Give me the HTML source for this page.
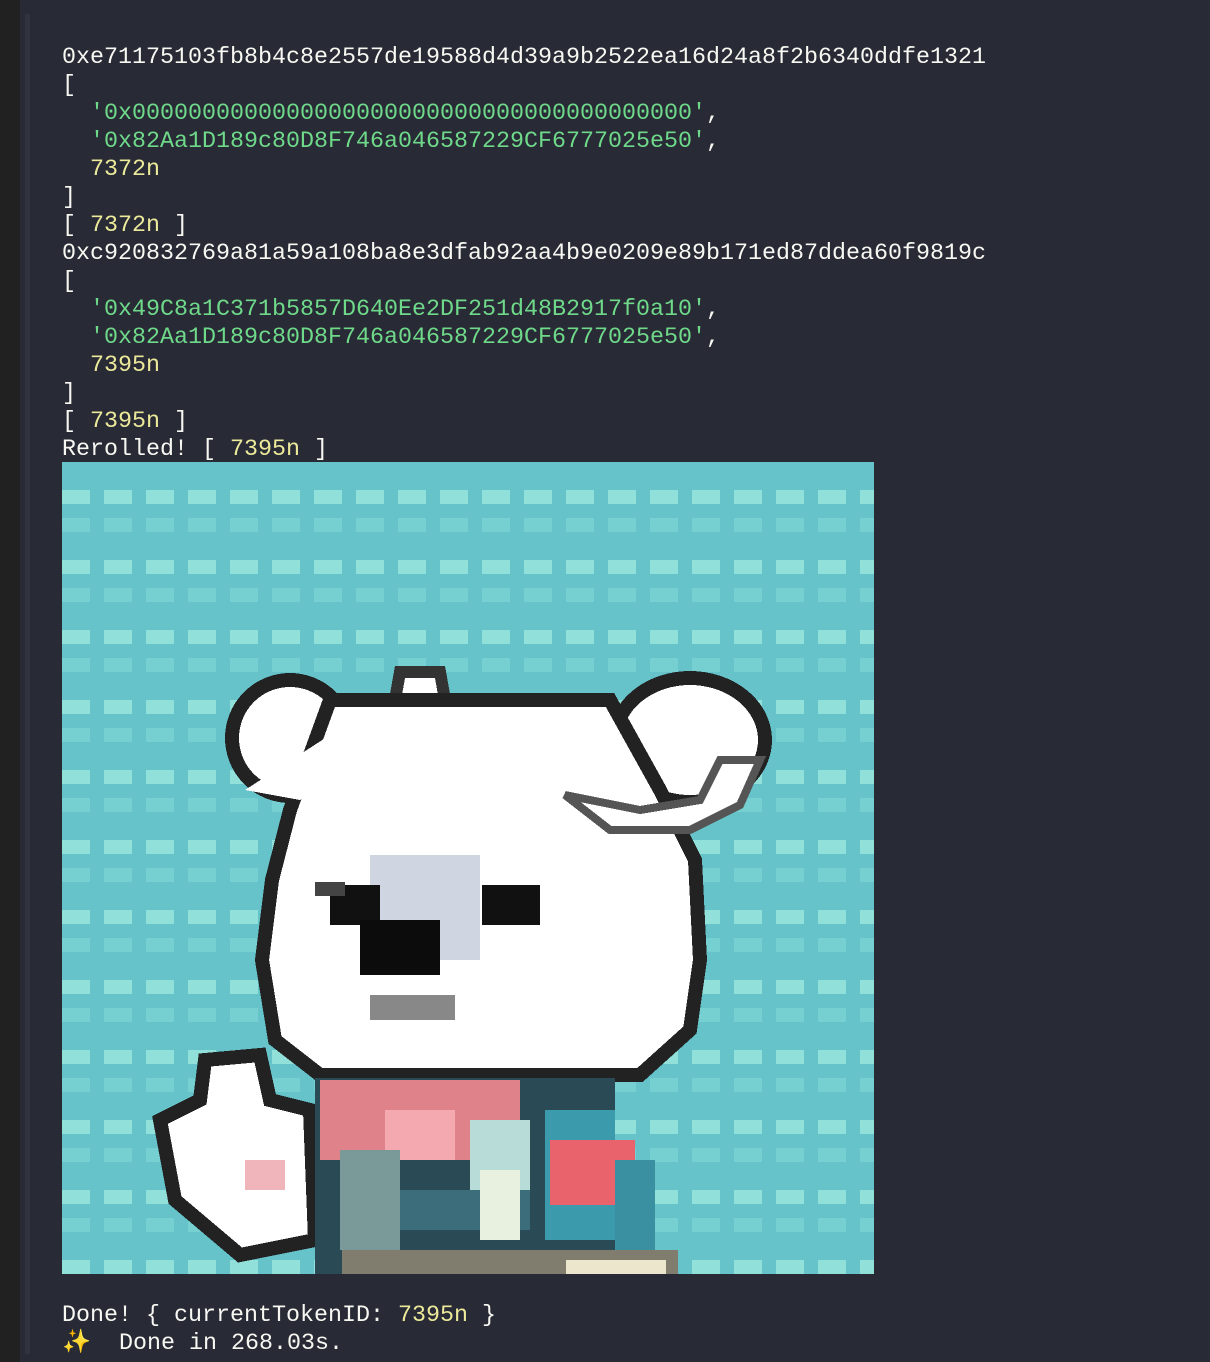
<!DOCTYPE html>
<html><head><style>
html,body{margin:0;padding:0;}
body{width:1210px;height:1362px;background:#282a36;position:relative;overflow:hidden;font-family:"Liberation Mono",monospace;font-size:23.33px;color:#f8f8f2;}
.side{position:absolute;left:0;top:0;width:20px;height:1362px;background:#212121;}
.bar{position:absolute;left:25px;top:14px;width:5px;height:1340px;background:#31333f;}
.t{position:absolute;left:62px;white-space:pre;line-height:28px;}
.g{color:#6fd98a;}
.y{color:#ecea9a;}
svg{position:absolute;left:62px;top:462px;}
</style></head><body>
<div class="side"></div><div class="bar"></div>
<div class="t" style="top:44px">0xe71175103fb8b4c8e2557de19588d4d39a9b2522ea16d24a8f2b6340ddfe1321
[
  <span class="g">'0x0000000000000000000000000000000000000000'</span>,
  <span class="g">'0x82Aa1D189c80D8F746a046587229CF6777025e50'</span>,
  <span class="y">7372n</span>
]
[ <span class="y">7372n</span> ]
0xc920832769a81a59a108ba8e3dfab92aa4b9e0209e89b171ed87ddea60f9819c
[
  <span class="g">'0x49C8a1C371b5857D640Ee2DF251d48B2917f0a10'</span>,
  <span class="g">'0x82Aa1D189c80D8F746a046587229CF6777025e50'</span>,
  <span class="y">7395n</span>
]
[ <span class="y">7395n</span> ]
Rerolled! [ <span class="y">7395n</span> ]</div>
<svg width="812" height="812" viewBox="62 462 812 812" shape-rendering="crispEdges">
<defs><pattern id="p" x="62" y="462" width="42" height="70" patternUnits="userSpaceOnUse">
<rect x="0" y="0" width="42" height="70" fill="#66c3ca"/>
<rect x="0" y="28" width="28" height="14" fill="#92e0da"/>
<rect x="0" y="56" width="28" height="14" fill="#76cfd0"/>
</pattern></defs>
<rect x="62" y="462" width="812" height="812" fill="url(#p)"/>
<ellipse cx="290" cy="738" rx="58" ry="58" fill="#fff" stroke="#222" stroke-width="14"/>
<ellipse cx="690" cy="740" rx="75" ry="62" fill="#fff" stroke="#222" stroke-width="14"/>
<polygon points="400,672 440,672 445,700 395,700" fill="#fff" stroke="#333" stroke-width="12"/>
<polygon points="330,700 610,700 660,790 695,860 700,960 690,1030 640,1075 320,1075 275,1040 262,960 272,880 290,810" fill="#fff" stroke="#222" stroke-width="14"/>
<polygon points="245,790 330,735 350,760 300,800" fill="#fff"/>
<polygon points="565,795 640,810 700,800 720,760 760,760 740,805 690,830 610,830" fill="#fff" stroke="#555" stroke-width="8"/>
<rect x="370" y="855" width="110" height="105" fill="#d0d5e2"/>
<rect x="330" y="885" width="50" height="40" fill="#111"/>
<rect x="315" y="882" width="30" height="14" fill="#444"/>
<rect x="482" y="885" width="58" height="40" fill="#111"/>
<rect x="360" y="920" width="80" height="55" fill="#0c0c0c"/>
<rect x="370" y="995" width="85" height="25" fill="#888"/>
<polygon points="205,1060 260,1055 270,1100 310,1110 315,1240 240,1255 175,1200 160,1120 200,1100" fill="#fff" stroke="#222" stroke-width="14"/>
<rect x="245" y="1160" width="40" height="30" fill="#f0b4bb"/>
<rect x="315" y="1078" width="300" height="196" fill="#2a4a55"/>
<rect x="320" y="1080" width="200" height="80" fill="#e0828a"/>
<rect x="385" y="1110" width="70" height="50" fill="#f4a8b0"/>
<rect x="470" y="1120" width="60" height="80" fill="#b8dcd8"/>
<rect x="545" y="1110" width="70" height="130" fill="#3b9aab"/>
<rect x="550" y="1140" width="85" height="65" fill="#e8636c"/>
<rect x="340" y="1150" width="60" height="100" fill="#7a9a9a"/>
<rect x="400" y="1190" width="130" height="40" fill="#3b6d7a"/>
<rect x="480" y="1170" width="40" height="70" fill="#e8f0e0"/>
<rect x="615" y="1160" width="40" height="90" fill="#3a8fa0"/>
<rect x="342" y="1250" width="336" height="24" fill="#807c6e"/>
<rect x="566" y="1260" width="100" height="14" fill="#ebe6cc"/>
</svg>
<div class="t" style="top:1302px">Done! { currentTokenID: <span class="y">7395n</span> }
<span style="color:#f4c542">✨</span>  Done in 268.03s.</div>
</body></html>
